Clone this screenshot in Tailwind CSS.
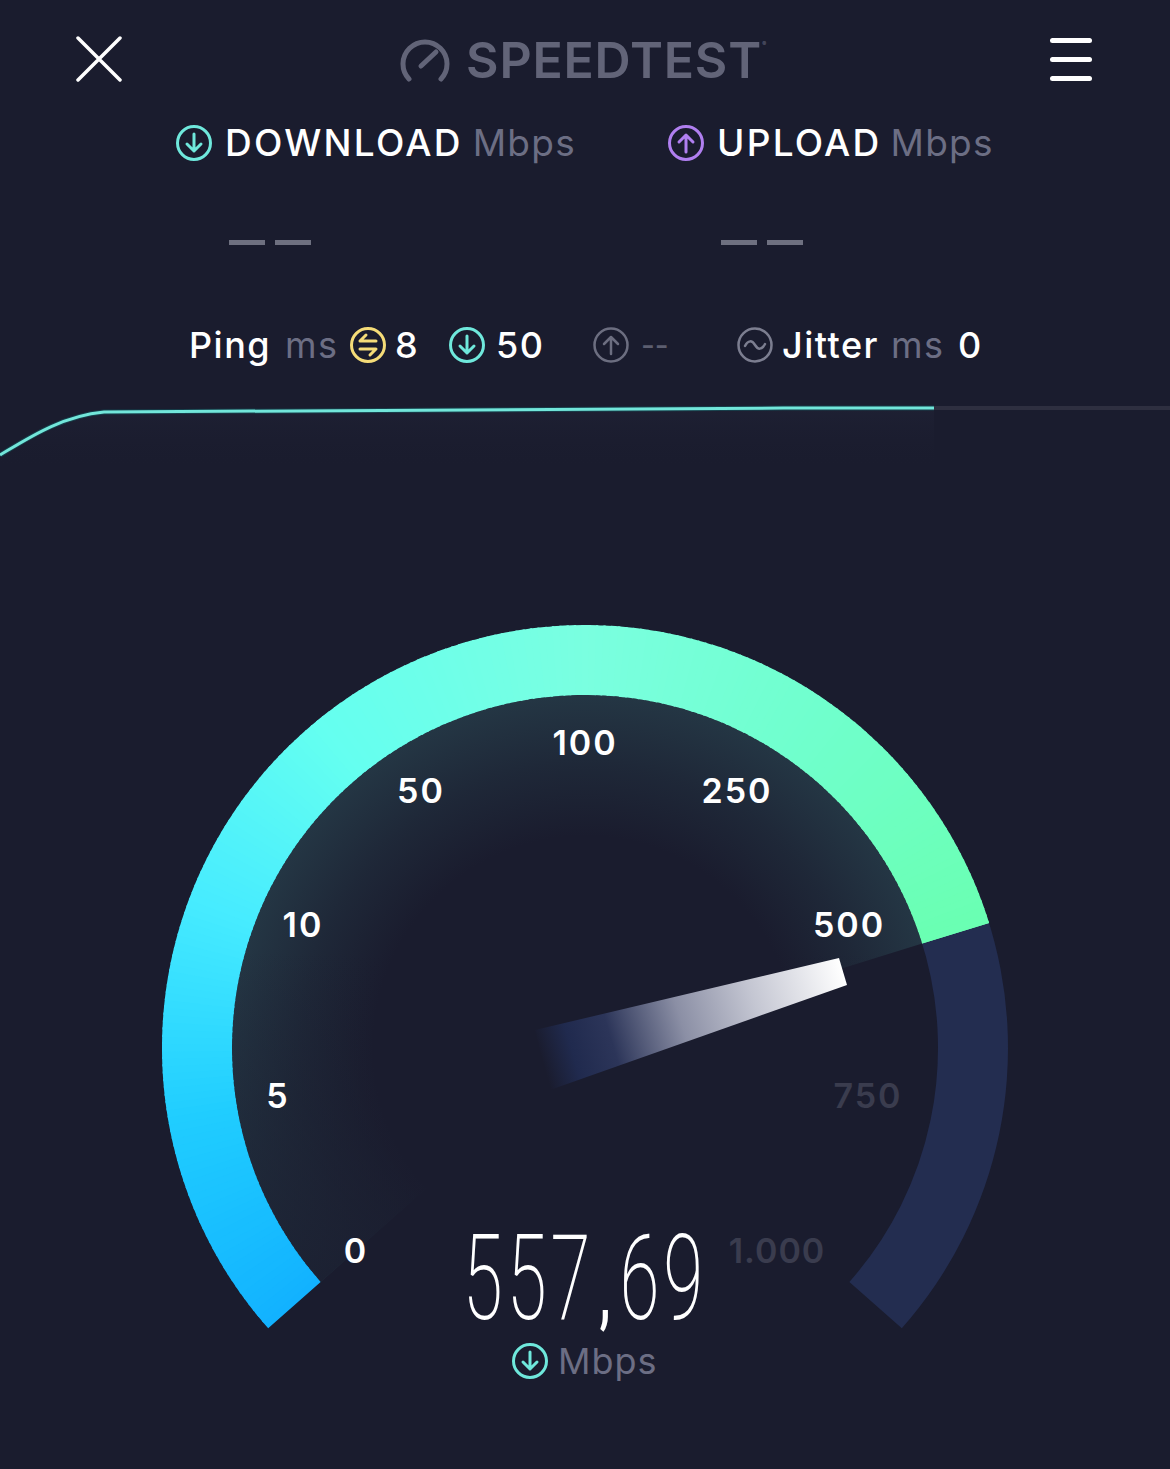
<!DOCTYPE html>
<html lang="en">
<head>
    <meta charset="UTF-8">
    <meta name="viewport" content="width=device-width, initial-scale=1.0">
    <title>Speedtest</title>
    <script src="https://cdn.jsdelivr.net/npm/@tailwindcss/browser@4"></script>
</head>
<body class="bg-[#1a1c2e] font-[Inter] text-white">
    <div class="w-[1170px] h-[1469px] overflow-hidden">
        <!-- top bar -->
        <header class="h-[120px] pt-[36px] pl-[76px] pr-[78px] flex items-start justify-between">
            <svg width="46" height="46" viewBox="0 0 46 46" fill="none" stroke="#fff" stroke-width="3.5" stroke-linecap="round">
                <path d="M2 2 L44 44 M44 2 L2 44"/>
            </svg>
            <div class="flex items-center gap-[16px] h-[46px] -ml-[10px] pt-[2px]">
                <svg width="50" height="44" viewBox="0 0 50 44" fill="none" stroke="#626478" stroke-width="5" stroke-linecap="round">
                    <path d="M9 41 A22 22 0 1 1 41 41"/>
                    <path d="M21 28 L36 14"/>
                </svg>
                <span class="relative text-[50px] leading-none font-semibold text-[#626478] tracking-[0.8px]">SPEEDTEST<span class="absolute -right-[5px] top-[6px] text-[6px]">®</span></span>
            </div>
            <div class="flex flex-col gap-[14px] pt-[2px] w-[42px]">
                <div class="h-[5px] bg-white rounded-full"></div>
                <div class="h-[5px] bg-white rounded-full"></div>
                <div class="h-[5px] bg-white rounded-full"></div>
            </div>
        </header>

        <!-- download / upload -->
        <section class="flex pl-[176px] h-[180px]">
            <div class="w-[492px]">
                <div class="flex items-center h-[46px]">
                    <svg width="36" height="36" viewBox="0 0 36 36" fill="none" stroke="#6fe8dc" stroke-width="3" stroke-linecap="round" stroke-linejoin="round">
                        <circle cx="18" cy="18" r="16.5"/>
                        <path d="M18 9 V26 M11 19 L18 26 L25 19"/>
                    </svg>
                    <span class="ml-[13px] text-[37px] font-medium tracking-[2.25px]">DOWNLOAD</span>
                    <span class="ml-[10px] text-[37px] text-[#6c6e84] tracking-[1.25px]">Mbps</span>
                </div>
                <div class="flex gap-[10px] ml-[53px] mt-[74px]">
                    <div class="w-[36px] h-[5px] bg-[#6e7080]"></div>
                    <div class="w-[36px] h-[5px] bg-[#6e7080]"></div>
                </div>
            </div>
            <div>
                <div class="flex items-center h-[46px]">
                    <svg width="36" height="36" viewBox="0 0 36 36" fill="none" stroke="#b07ff0" stroke-width="3" stroke-linecap="round" stroke-linejoin="round">
                        <circle cx="18" cy="18" r="16.5"/>
                        <path d="M18 27 V10 M11 17 L18 10 L25 17"/>
                    </svg>
                    <span class="ml-[13px] text-[37px] font-medium tracking-[2.25px]">UPLOAD</span>
                    <span class="ml-[9px] text-[37px] text-[#6c6e84] tracking-[1.25px]">Mbps</span>
                </div>
                <div class="flex gap-[10px] ml-[53px] mt-[74px]">
                    <div class="w-[36px] h-[5px] bg-[#6e7080]"></div>
                    <div class="w-[36px] h-[5px] bg-[#6e7080]"></div>
                </div>
            </div>
        </section>

        <!-- ping row -->
        <section class="flex items-center h-[90px] pl-[189px] text-[36px] font-medium tracking-[1.5px]">
            <span class="w-[96px]">Ping</span>
            <span class="w-[65px] text-[#6c6e84] font-normal">ms</span>
            <svg width="36" height="36" viewBox="0 0 36 36" fill="none" stroke="#f5dc78" stroke-width="3" stroke-linecap="round" stroke-linejoin="round">
                <circle cx="18" cy="18" r="16.5"/>
                <path d="M26 14 H10 L16 8 M10 22 H26 L20 28"/>
            </svg>
            <span class="ml-[9px] w-[54px]">8</span>
            <svg width="36" height="36" viewBox="0 0 36 36" fill="none" stroke="#6fe8dc" stroke-width="3" stroke-linecap="round" stroke-linejoin="round">
                <circle cx="18" cy="18" r="16.5"/>
                <path d="M18 9 V26 M11 19 L18 26 L25 19"/>
            </svg>
            <span class="ml-[11px] w-[97px]">50</span>
            <svg width="36" height="36" viewBox="0 0 36 36" fill="none" stroke="#6c6e80" stroke-width="2.5" stroke-linecap="round" stroke-linejoin="round">
                <circle cx="18" cy="18" r="16.5"/>
                <path d="M18 27 V10 M11 17 L18 10 L25 17"/>
            </svg>
            <span class="ml-[12px] w-[96px] text-[30px] tracking-[0px] text-[#5c5e70]">--</span>
            <svg width="36" height="36" viewBox="0 0 36 36" fill="none" stroke="#7c7e90" stroke-width="2.5" stroke-linecap="round" stroke-linejoin="round">
                <circle cx="18" cy="18" r="16.5"/>
                <path d="M8 19 C11 13 15 13 18 18 C21 23 25 23 28 17"/>
            </svg>
            <span class="ml-[9px] w-[109px]">Jitter</span>
            <span class="w-[67px] text-[#6c6e84] font-normal">ms</span>
            <span>0</span>
        </section>

        <!-- live chart -->
        <svg class="block" width="1170" height="80" viewBox="0 390 1170 80" fill="none">
            <defs>
                <linearGradient id="chartGlow" x1="0" y1="408" x2="0" y2="470" gradientUnits="userSpaceOnUse">
                    <stop offset="0" stop-color="#2a2d42" stop-opacity="0.25"/>
                    <stop offset="1" stop-color="#1a1c2e" stop-opacity="0"/>
                </linearGradient>
            </defs>
            <path d="M0 455 C30 437 62 416 104 412 C220 409 600 408 934 408 V470 H0 Z" fill="url(#chartGlow)"/>
            <path d="M934 408 H1170" stroke="#2e2f40" stroke-width="4"/>
            <path d="M0 455 C30 437 62 416 104 412 C220 409 600 408 934 408" stroke="#0f6f70" stroke-width="5" opacity="0.4"/>
            <path d="M0 455 C30 437 62 416 104 412 C220 409 600 408 934 408" stroke="#72e6da" stroke-width="3"/>
        </svg>

        <!-- gauge -->
        <section class="relative h-[869px] mt-[130px]">
            <svg id="gauge" class="absolute inset-0" width="1170" height="869" viewBox="0 600 1170 869" fill="none">
                <defs>
                    <radialGradient id="gaugeGlow" cx="585" cy="1048" r="353" gradientUnits="userSpaceOnUse">
                        <stop offset="0.6" stop-color="#243644" stop-opacity="0"/>
                        <stop offset="0.8" stop-color="#243644" stop-opacity="0.45"/>
                        <stop offset="1" stop-color="#243644" stop-opacity="1"/>
                    </radialGradient>
                    <linearGradient id="glowFade" x1="0" y1="950" x2="0" y2="1300" gradientUnits="userSpaceOnUse">
                        <stop offset="0" stop-color="#1a1c2e" stop-opacity="0"/>
                        <stop offset="1" stop-color="#1a1c2e" stop-opacity="0.85"/>
                    </linearGradient>
                    <linearGradient id="needle" x1="843" y1="971" x2="542" y2="1060" gradientUnits="userSpaceOnUse">
                        <stop offset="0" stop-color="#ffffff"/>
                        <stop offset="0.3" stop-color="#c4c6d2"/>
                        <stop offset="0.54" stop-color="#8b8fa5"/>
                        <stop offset="0.77" stop-color="#2c3559"/>
                        <stop offset="0.9" stop-color="#202a4e"/>
                        <stop offset="1" stop-color="#1a1c2e"/>
                    </linearGradient>
                </defs>
                <g id="arcs"></g>
                <polygon points="839,958 847,985 550,1090 535,1030" fill="url(#needle)"/>
            </svg>

            <span class="absolute left-[585px] top-[142px] -translate-x-1/2 -translate-y-1/2 text-[34px] font-semibold tracking-[2px]">100</span>
            <span class="absolute left-[421px] top-[190px] -translate-x-1/2 -translate-y-1/2 text-[34px] font-semibold tracking-[2px]">50</span>
            <span class="absolute left-[737px] top-[190px] -translate-x-1/2 -translate-y-1/2 text-[34px] font-semibold tracking-[2px]">250</span>
            <span class="absolute left-[303px] top-[324px] -translate-x-1/2 -translate-y-1/2 text-[34px] font-semibold tracking-[2px]">10</span>
            <span class="absolute left-[849px] top-[324px] -translate-x-1/2 -translate-y-1/2 text-[34px] font-semibold tracking-[2px]">500</span>
            <span class="absolute left-[278px] top-[495px] -translate-x-1/2 -translate-y-1/2 text-[34px] font-semibold tracking-[2px]">5</span>
            <span class="absolute left-[868px] top-[495px] -translate-x-1/2 -translate-y-1/2 text-[34px] font-semibold tracking-[2px] text-[#3a3c4e]">750</span>
            <span class="absolute left-[356px] top-[650px] -translate-x-1/2 -translate-y-1/2 text-[34px] font-semibold tracking-[2px]">0</span>
            <span class="absolute left-[777px] top-[650px] -translate-x-1/2 -translate-y-1/2 text-[34px] font-semibold tracking-[1px] text-[#3a3c4e]">1.000</span>

            <span class="absolute left-[585px] top-[685px] -translate-x-1/2 -translate-y-1/2 font-[Roboto] font-extralight text-[118px] leading-[100px] tracking-[6.5px] scale-x-[0.615] whitespace-nowrap">557<span class="text-[80px] font-medium px-[8px]">,</span>69</span>

            <div class="absolute left-[512px] top-[738px] flex items-center h-[46px]">
                <svg width="36" height="36" viewBox="0 0 36 36" fill="none" stroke="#6fe8dc" stroke-width="3" stroke-linecap="round" stroke-linejoin="round">
                    <circle cx="18" cy="18" r="16.5"/>
                    <path d="M18 9 V26 M11 19 L18 26 L25 19"/>
                </svg>
                <span class="ml-[10px] text-[36px] text-[#6c6e84] tracking-[1px]">Mbps</span>
            </div>
        </section>
    </div>

    <script>
        // gauge arcs: angles are degrees clockwise from straight up
        const cx = 585, cy = 1048;
        const arcs = document.getElementById('arcs');
        const START = -131.5, PROGRESS = 72.8, END = 131.5;
        const stops = [
            [-131.5, [18, 178, 255]],
            [-100, [32, 205, 255]],
            [-70, [70, 235, 255]],
            [-40, [100, 255, 240]],
            [0, [122, 255, 224]],
            [35, [112, 255, 205]],
            [72.8, [106, 255, 178]]
        ];

        function pt(r, deg) {
            const a = deg * Math.PI / 180;
            return [cx + r * Math.sin(a), cy - r * Math.cos(a)];
        }

        function sector(r1, r2, a, b) {
            const p1 = pt(r2, a), p2 = pt(r2, b), p3 = pt(r1, b), p4 = pt(r1, a);
            const large = b - a > 180 ? 1 : 0;
            return `M${p1} A${r2} ${r2} 0 ${large} 1 ${p2} L${p3} A${r1} ${r1} 0 ${large} 0 ${p4} Z`;
        }

        function colorAt(deg) {
            for (let i = 0; i < stops.length - 1; i++) {
                const [a, c1] = stops[i], [b, c2] = stops[i + 1];
                if (deg <= b) {
                    const t = (deg - a) / (b - a);
                    return `rgb(${c1.map((v, k) => Math.round(v + (c2[k] - v) * t)).join(',')})`;
                }
            }
            return 'rgb(106,255,178)';
        }

        function add(d, fill) {
            const p = document.createElementNS('http://www.w3.org/2000/svg', 'path');
            p.setAttribute('d', d);
            p.setAttribute('fill', fill);
            arcs.appendChild(p);
        }

        add(sector(353, 423, PROGRESS - 1, END), '#232d50');
        add(sector(0, 353, START, PROGRESS), 'url(#gaugeGlow)');
        add(sector(0, 353, START, PROGRESS), 'url(#glowFade)');
        const step = 1;
        for (let a = START; a < PROGRESS; a += step) {
            const b = Math.min(a + step + 0.3, PROGRESS);
            add(sector(353, 423, a, b), colorAt(a + step / 2));
        }
    </script>
</body>
</html>
